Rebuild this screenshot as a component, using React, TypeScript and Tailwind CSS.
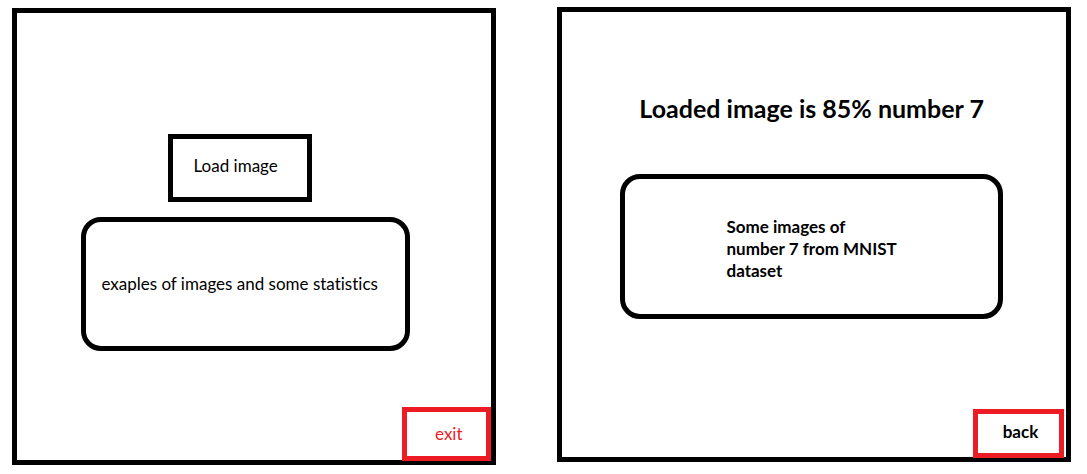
export default function App() {
  return (
    <main className="flex min-h-screen items-start bg-white pl-3 pr-4 pt-[7px] font-['Lato','Open_Sans',sans-serif] text-[17px] leading-[22px] text-black [font-variant-ligatures:none]">
      <section className="mt-px flex min-h-[457px] min-w-0 flex-[484] flex-col border-[5px] border-black">
        <div className="flex flex-col items-center gap-[15px] pt-[121px] pr-[17px]">
          <button className="mr-3 h-[68px] w-36 border-[5px] border-black pr-2 pb-1">Load image</button>
          <div className="flex h-[134px] w-[329px] items-center justify-center rounded-[20px] border-[5px] border-black">
            <p className="pr-3">exaples of images and some statistics</p>
          </div>
        </div>
        <button className="mt-auto -mb-px h-[54px] w-[89px] self-end border-[5px] border-[#ed1c24] pl-1 text-[#ed1c24]">exit</button>
      </section>
      <section className="ml-[61px] flex min-h-[455px] min-w-0 flex-[514] flex-col border-[5px] border-black font-bold">
        <div className="flex flex-col items-center gap-[50px] pt-20 pr-[5px]">
          <h1 className="text-[25px] leading-8">Loaded image is 85% number 7</h1>
          <div className="flex h-[145px] w-[383px] items-center justify-center rounded-[20px] border-[5px] border-black">
            <p className="pt-1">
              Some images of
              <br />
              number 7 from MNIST
              <br />
              dataset
            </p>
          </div>
        </div>
        <button className="mt-auto mr-[2px] -mb-px h-[49px] w-[91px] self-end border-[5px] border-[#ed1c24] pl-1 pb-1">back</button>
      </section>
    </main>
  );
}
